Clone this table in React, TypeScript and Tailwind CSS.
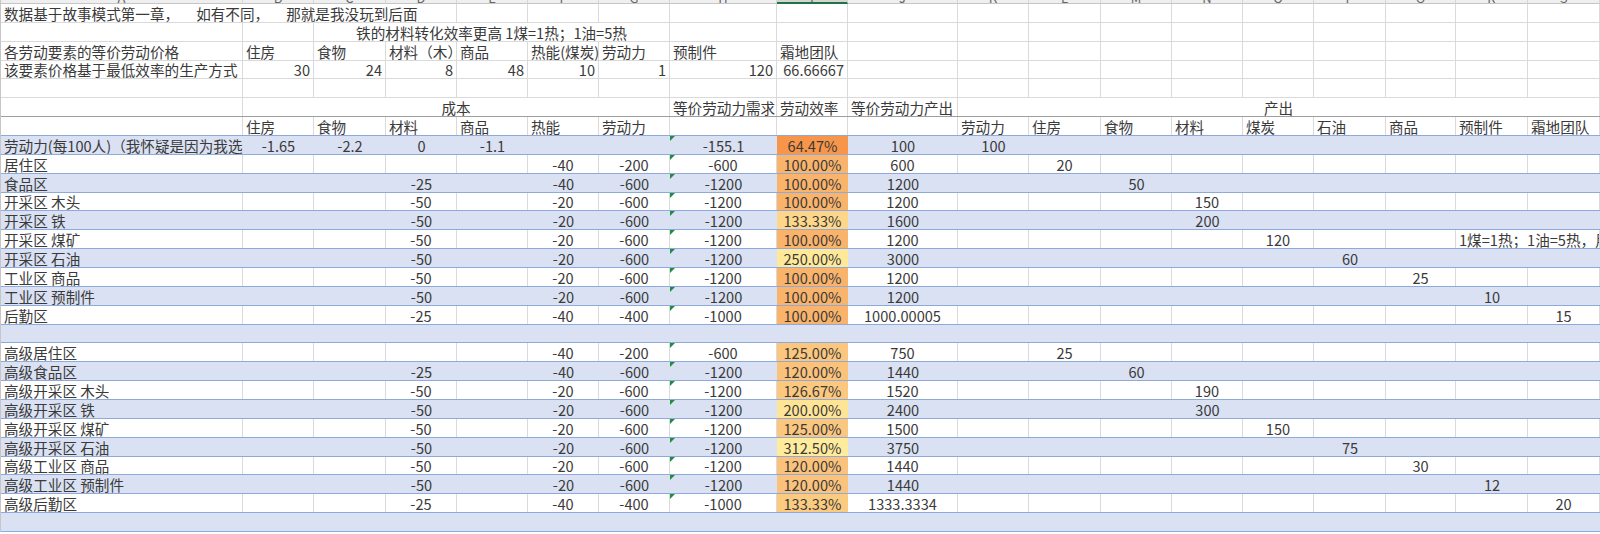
import clsx from 'clsx';
import type { ReactNode } from 'react';

type Align = 'l' | 'r' | 'c';
type Kind = 'grid' | 'split' | 'head' | 'blue' | 'white';

interface Cell {
  v?: ReactNode;
  span?: number;
  align?: Align;
  bg?: string;
  flag?: boolean;
  clip?: boolean;
}

interface SheetRowData {
  kind: Kind;
  cells: Cell[];
}

interface Zone {
  name: string;
  cost: string[]; // B..G
  need: string;
  eff: string;
  effBg: string;
  out: string;
  prodCol: number;
  prod: string;
  note?: string;
}

const GRID =
  'grid-cols-[242px_71px_72px_71px_71px_71px_71px_107px_71px_110px_71px_72px_71px_71px_71px_72px_70px_72px_72px]';

const SPAN: Record<number, string> = {
  1: '',
  2: 'col-span-2',
  4: 'col-span-4',
  5: 'col-span-5',
  6: 'col-span-6',
  9: 'col-span-9',
};

const ALIGN: Record<Align, string> = {
  l: 'justify-start',
  r: 'justify-end',
  c: 'justify-center',
};

const ROW_STYLE: Record<Kind, string> = {
  grid: 'border-[#dadada] bg-white',
  split: 'border-[#9e9e9e] bg-white',
  head: 'border-[#8ea9db] bg-white',
  blue: 'border-[#8ea9db] bg-[#d9e1f2]',
  white: 'border-[#8ea9db] bg-white',
};

const LETTERS = 'ABCDEFGHIJKLMNOPQRS'.split('');

// turn a sparse column map into 19 cells, respecting merged spans
function line(m: Record<number, Cell | string>): Cell[] {
  const out: Cell[] = [];
  let i = 0;
  while (i < 19) {
    const c = m[i];
    if (c === undefined) {
      out.push({});
      i += 1;
    } else {
      const cell = typeof c === 'string' ? { v: c } : c;
      out.push(cell);
      i += cell.span ?? 1;
    }
  }
  return out;
}

function right(m: Record<number, string>): Record<number, Cell> {
  const r: Record<number, Cell> = {};
  Object.entries(m).forEach(([k, v]) => {
    r[Number(k)] = { v, align: k === '0' ? 'l' : 'r' };
  });
  return r;
}

const MINE = ['', '', '-50', '', '-20', '-600'];

const zones: (Zone | null)[] = [
  { name: '劳动力(每100人)（我怀疑是因为我选:', cost: ['-1.65', '-2.2', '0', '-1.1', '', ''], need: '-155.1', eff: '64.47%', effBg: 'bg-[#f7964a]', out: '100', prodCol: 10, prod: '100' },
  { name: '居住区', cost: ['', '', '', '', '-40', '-200'], need: '-600', eff: '100.00%', effBg: 'bg-[#f9b36b]', out: '600', prodCol: 11, prod: '20' },
  { name: '食品区', cost: ['', '', '-25', '', '-40', '-600'], need: '-1200', eff: '100.00%', effBg: 'bg-[#f9b36b]', out: '1200', prodCol: 12, prod: '50' },
  { name: '开采区 木头', cost: MINE, need: '-1200', eff: '100.00%', effBg: 'bg-[#f9b36b]', out: '1200', prodCol: 13, prod: '150' },
  { name: '开采区 铁', cost: MINE, need: '-1200', eff: '133.33%', effBg: 'bg-[#fdd68a]', out: '1600', prodCol: 13, prod: '200' },
  { name: '开采区 煤矿', cost: MINE, need: '-1200', eff: '100.00%', effBg: 'bg-[#f9b36b]', out: '1200', prodCol: 14, prod: '120', note: '1煤=1热；1油=5热，用于计算' },
  { name: '开采区 石油', cost: MINE, need: '-1200', eff: '250.00%', effBg: 'bg-[#ffe999]', out: '3000', prodCol: 15, prod: '60' },
  { name: '工业区 商品', cost: MINE, need: '-1200', eff: '100.00%', effBg: 'bg-[#f9b36b]', out: '1200', prodCol: 16, prod: '25' },
  { name: '工业区 预制件', cost: MINE, need: '-1200', eff: '100.00%', effBg: 'bg-[#f9b36b]', out: '1200', prodCol: 17, prod: '10' },
  { name: '后勤区', cost: ['', '', '-25', '', '-40', '-400'], need: '-1000', eff: '100.00%', effBg: 'bg-[#f9b36b]', out: '1000.00005', prodCol: 18, prod: '15' },
  null,
  { name: '高级居住区', cost: ['', '', '', '', '-40', '-200'], need: '-600', eff: '125.00%', effBg: 'bg-[#fbc67d]', out: '750', prodCol: 11, prod: '25' },
  { name: '高级食品区', cost: ['', '', '-25', '', '-40', '-600'], need: '-1200', eff: '120.00%', effBg: 'bg-[#fac27a]', out: '1440', prodCol: 12, prod: '60' },
  { name: '高级开采区 木头', cost: MINE, need: '-1200', eff: '126.67%', effBg: 'bg-[#fbc87e]', out: '1520', prodCol: 13, prod: '190' },
  { name: '高级开采区 铁', cost: MINE, need: '-1200', eff: '200.00%', effBg: 'bg-[#fee495]', out: '2400', prodCol: 13, prod: '300' },
  { name: '高级开采区 煤矿', cost: MINE, need: '-1200', eff: '125.00%', effBg: 'bg-[#fbc67d]', out: '1500', prodCol: 14, prod: '150' },
  { name: '高级开采区 石油', cost: MINE, need: '-1200', eff: '312.50%', effBg: 'bg-[#ffeb9c]', out: '3750', prodCol: 15, prod: '75' },
  { name: '高级工业区 商品', cost: MINE, need: '-1200', eff: '120.00%', effBg: 'bg-[#fac27a]', out: '1440', prodCol: 16, prod: '30' },
  { name: '高级工业区 预制件', cost: MINE, need: '-1200', eff: '120.00%', effBg: 'bg-[#fac27a]', out: '1440', prodCol: 17, prod: '12' },
  { name: '高级后勤区', cost: ['', '', '-25', '', '-40', '-400'], need: '-1000', eff: '133.33%', effBg: 'bg-[#fbcb80]', out: '1333.3334', prodCol: 18, prod: '20' },
  null,
];

function zoneCells(z: Zone | null): Cell[] {
  if (!z) return line({});
  const m: Record<number, Cell> = { 0: { v: z.name, clip: true } };
  z.cost.forEach((v, i) => {
    if (v) m[i + 1] = { v, align: 'c' };
  });
  m[7] = { v: z.need, align: 'c', flag: true };
  m[8] = { v: z.eff, align: 'c', bg: z.effBg };
  m[9] = { v: z.out, align: 'c' };
  m[z.prodCol] = { v: z.prod, align: 'c' };
  if (z.note) m[17] = { v: z.note, span: 2, clip: true };
  return line(m);
}

// the sheet font draws full-width commas with a wide advance
const intro = (
  <span>
    数据基于故事模式第一章<span className="mr-[17px]">，</span>如有不同<span className="mr-[17px]">，</span>
    那就是我没玩到后面
  </span>
);

const rows: SheetRowData[] = [
  { kind: 'grid', cells: line({ 0: { v: intro, span: 4 } }) },
  { kind: 'grid', cells: line({ 2: { v: '铁的材料转化效率更高 1煤=1热；1油=5热', span: 5, align: 'c' } }) },
  {
    kind: 'grid',
    cells: line({ 0: '各劳动要素的等价劳动价格', 1: '住房', 2: '食物', 3: '材料（木）', 4: '商品', 5: '热能(煤炭)', 6: '劳动力', 7: '预制件', 8: '霜地团队' }),
  },
  {
    kind: 'grid',
    cells: line(right({ 0: '该要素价格基于最低效率的生产方式', 1: '30', 2: '24', 3: '8', 4: '48', 5: '10', 6: '1', 7: '120', 8: '66.66667' })),
  },
  { kind: 'grid', cells: line({}) },
  {
    kind: 'split',
    cells: line({
      1: { v: '成本', span: 6, align: 'c' },
      7: '等价劳动力需求',
      8: '劳动效率',
      9: '等价劳动力产出',
      10: { v: '产出', span: 9, align: 'c' },
    }),
  },
  {
    kind: 'head',
    cells: line({ 1: '住房', 2: '食物', 3: '材料', 4: '商品', 5: '热能', 6: '劳动力', 10: '劳动力', 11: '住房', 12: '食物', 13: '材料', 14: '煤炭', 15: '石油', 16: '商品', 17: '预制件', 18: '霜地团队' }),
  },
  ...zones.map((z, i) => ({ kind: (i % 2 === 0 ? 'blue' : 'white') as Kind, cells: zoneCells(z) })),
];

function ColumnHeader() {
  return (
    <div className={clsx('grid h-[4px]', GRID)}>
      {LETTERS.map((l) => (
        <div
          key={l}
          className={clsx(
            'flex h-[4px] items-end justify-center overflow-hidden border-r border-[#d5d5d5]',
            l === 'I' ? 'border-b-2 border-b-[#217346] bg-[#d4d4d4]' : 'border-b border-b-[#c6c6c6] bg-[#efefef]'
          )}
        >
          <span className="text-[13px] leading-[10px] text-[#666]">{l}</span>
        </div>
      ))}
    </div>
  );
}

function SheetRow({ row }: { row: SheetRowData }) {
  const blue = row.kind === 'blue';
  return (
    <div className={clsx('grid h-[18.87px] border-b', GRID, ROW_STYLE[row.kind])}>
      {row.cells.map((c, i) => (
        <div
          key={i}
          className={clsx(
            'relative flex min-w-0 items-end whitespace-nowrap px-[3px] leading-[17px]',
            c.clip && 'overflow-hidden',
            SPAN[c.span ?? 1],
            ALIGN[c.align ?? 'l'],
            !blue && !c.bg && 'border-r border-[#dadada]',
            c.bg
          )}
        >
          {/* excel's green error marker */}
          {c.flag && (
            <span className="absolute left-0 top-0 h-0 w-0 border-r-[5px] border-t-[5px] border-r-transparent border-t-[#1e8e3e]" />
          )}
          {c.v}
        </div>
      ))}
    </div>
  );
}

export default function App() {
  return (
    <div className="h-[534px] w-[1600px] overflow-hidden bg-white text-[14.6px] text-[#3a3a3a] [font-family:'Noto_Sans_CJK_SC','Noto_Sans',sans-serif]">
      <div className="border-l border-[#c6c6c6]">
        <ColumnHeader />
        {rows.map((r, i) => (
          <SheetRow key={i} row={r} />
        ))}
      </div>
    </div>
  );
}
